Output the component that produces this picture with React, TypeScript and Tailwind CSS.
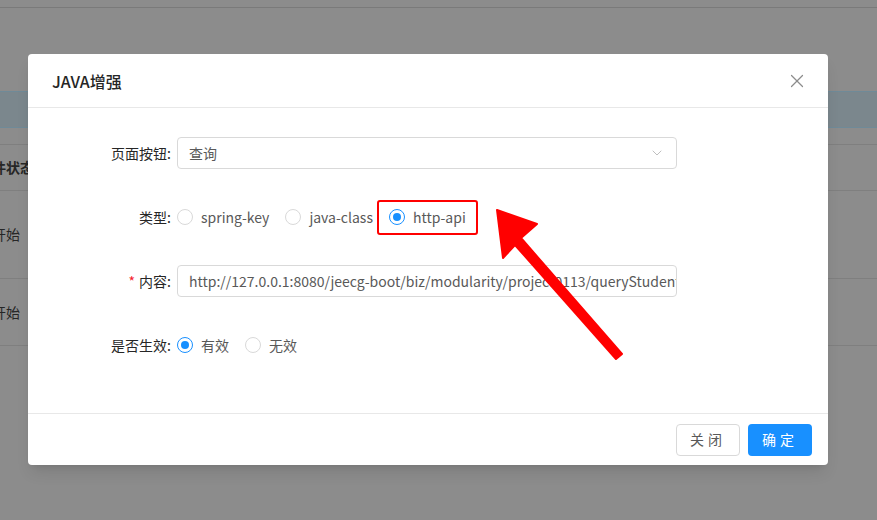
import { ChevronDown, X } from 'lucide-react';

const font = { fontFamily: '"Noto Sans CJK SC", "Noto Sans", sans-serif' };

function Radio({ checked, label }: { checked?: boolean; label: string }) {
  return (
    <span className="flex items-center gap-2 text-[14px] text-[#595959]">
      <span
        className={`flex h-4 w-4 items-center justify-center rounded-full border bg-white ${checked ? 'border-[#1890ff]' : 'border-[#d9d9d9]'}`}
      >
        {checked && <span className="h-2 w-2 rounded-full bg-[#1890ff]" />}
      </span>
      {label}
    </span>
  );
}

function Row({ label, required, children }: { label: string; required?: boolean; children: React.ReactNode }) {
  return (
    <div className="flex h-8 items-center">
      <div className="w-[149px] pr-[6px] text-right text-[14px] text-[#262626]">
        {required && <span className="mr-1 text-[#f5222d]">*</span>}
        {label}:
      </div>
      <div className="flex w-[500px] items-center">{children}</div>
    </div>
  );
}

export default function App() {
  return (
    <div className="relative h-[520px] w-[877px] overflow-hidden bg-[#8c8c8c]" style={font}>
      {/* dimmed page behind */}
      <div className="h-2 border-b border-[#7a7a7a]" />
      <div className="h-[83px]" />
      <div className="h-[37px] border-y border-[#6f8a98] bg-[#7b878d]" />
      <div className="h-[17px] border-b border-[#7f7f7f]" />
      <div className="flex h-[46px] items-center border-b border-[#7f7f7f] text-[14px] font-bold text-[#262626]">
        <span className="-ml-2">件状态</span>
      </div>
      <div className="flex h-[88px] items-center border-b border-[#7f7f7f] text-[14px] text-[#262626]">
        <span className="-ml-2">开始</span>
      </div>
      <div className="flex h-[67px] items-center border-b border-[#7f7f7f] text-[14px] text-[#262626]">
        <span className="-ml-2">开始</span>
      </div>

      {/* modal */}
      <div className="absolute left-[28px] top-[54px] flex h-[411px] w-[800px] flex-col rounded bg-white shadow-lg">
        <div className="flex h-[54px] items-center justify-between border-b border-[#e8e8e8] pl-6 pr-5">
          <span className="text-[16px] font-medium text-[#262626]">JAVA增强</span>
          <X className="h-[22px] w-[22px] text-[#8c8c8c]" strokeWidth={1.3} />
        </div>
        <div className="flex flex-1 flex-col gap-8 pt-[29px]">
          <Row label="页面按钮">
            <div className="flex h-8 w-full items-center justify-between rounded border border-[#d9d9d9] px-[11px] text-[14px] text-[#595959]">
              查询
              <ChevronDown className="h-4 w-4 text-[#bfbfbf]" strokeWidth={1.5} />
            </div>
          </Row>
          <Row label="类型">
            <div className="flex items-center gap-4">
              <Radio label="spring-key" />
              <Radio label="java-class" />
              <span className="-ml-[12px] rounded-[3px] border-2 border-[#ff0000] px-[10px] py-[5px]">
                <Radio checked label="http-api" />
              </span>
            </div>
          </Row>
          <Row label="内容" required>
            <div className="flex h-8 w-full items-center overflow-hidden whitespace-nowrap rounded border border-[#d9d9d9] px-[11px] text-[14px] text-[#595959]">
              http://127.0.0.1:8080/jeecg-boot/biz/modularity/project0113/queryStudent
            </div>
          </Row>
          <Row label="是否生效">
            <div className="flex items-center gap-4">
              <Radio checked label="有效" />
              <Radio label="无效" />
            </div>
          </Row>
        </div>
        <div className="flex h-[52px] items-center justify-end gap-2 border-t border-[#e8e8e8] px-4">
          <button className="h-8 w-[64px] rounded border border-[#d9d9d9] bg-white text-[14px] tracking-[4px] text-[#595959]">关闭</button>
          <button className="h-8 w-[64px] rounded bg-[#1890ff] text-[14px] tracking-[4px] text-white">确定</button>
        </div>
      </div>

      {/* red arrow */}
      <svg className="absolute left-0 top-0" width="877" height="520" viewBox="0 0 877 520">
        <path d="M497 210 L537 224 L521 238 L622 354 L616 359 L515 245 L503 258 Z" fill="#ff0000" strokeLinejoin="round" stroke="#ff0000" strokeWidth="2" />
      </svg>
    </div>
  );
}
